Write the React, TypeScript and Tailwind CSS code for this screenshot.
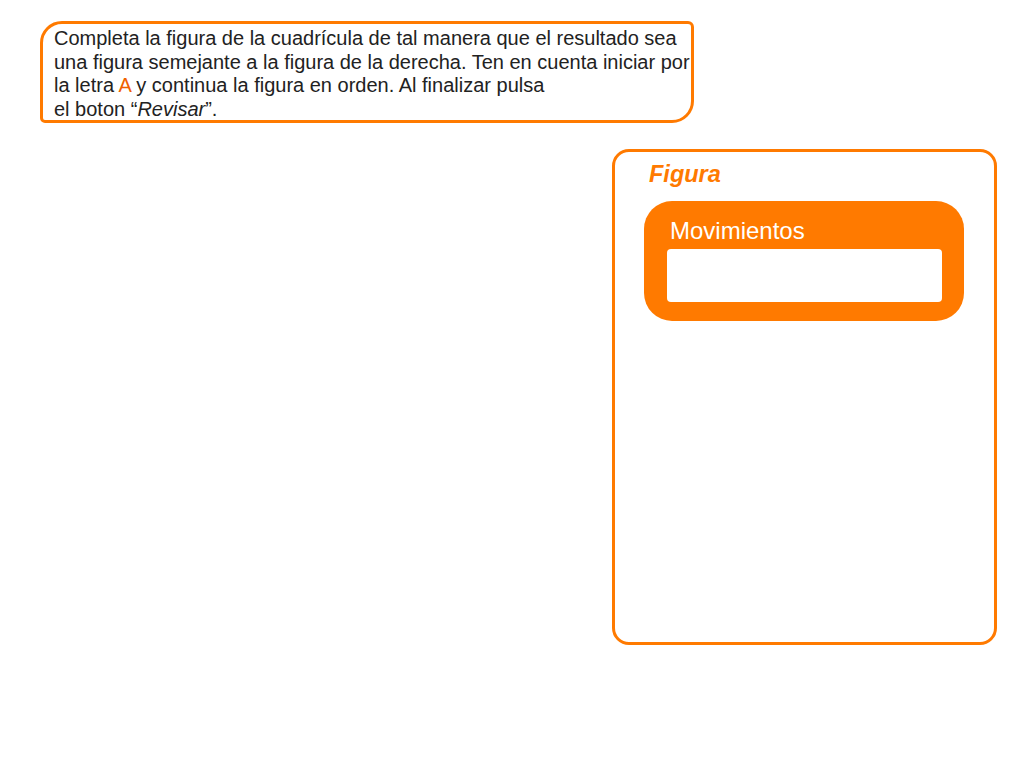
import React from 'react';

export default function App() {
  return (
    <div className="w-[1024px] h-[768px] bg-white font-['Liberation_Sans',Arial,sans-serif] flex flex-col">
      {/* Instrucciones */}
      <div className="ml-[40px] mt-[21px] w-[654px] h-[102px] border-[3px] border-[#ff7a00] rounded-tl-[22px] rounded-tr-[6px] rounded-br-[22px] rounded-bl-[5px] pl-[11px] pt-[3px]">
        <p className="text-[20px] leading-[23.5px] text-[#222] whitespace-nowrap">
          Completa la figura de la cuadrícula de tal manera que el resultado sea
          <br />
          una figura semejante a la figura de la derecha. Ten en cuenta iniciar por
          <br />
          la letra <span className="text-[#f06000]">A</span> y continua la figura en orden. Al finalizar pulsa
          <br />
          el boton “<i>Revisar</i>”.
        </p>
      </div>

      {/* Panel de figura */}
      <div className="ml-[612px] mt-[26px] w-[385px] h-[496px] border-[3px] border-[#ff7a00] rounded-[17px] pt-[7px] pl-[29px]">
        <h2 className="ml-[5px] text-[23.5px] leading-[30px] font-bold italic text-[#ff7a00]">Figura</h2>
        <div className="mt-[12px] w-[320px] h-[120px] bg-[#ff7a00] rounded-[28px] pt-[16px] px-[23px]">
          <div className="pl-[3px] text-[24px] leading-[28px] text-white">Movimientos</div>
          <div className="mt-[4px] w-[275px] h-[53px] bg-white rounded-[4px]" />
        </div>
      </div>
    </div>
  );
}
